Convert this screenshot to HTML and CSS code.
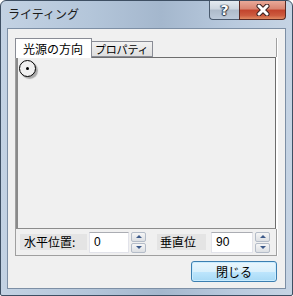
FILE: index.html
```html
<!DOCTYPE html>
<html lang="ja">
<head>
    <meta charset="UTF-8">
    <title>ライティング</title>
    <link rel="stylesheet" href="styles.css">
</head>
<body>
    <div class="window">
        <div class="titlebar">
            <span class="title">ライティング</span>
            <div class="caption-buttons">
                <div class="cap-btn help">?</div>
                <div class="cap-btn close">
                    <svg width="14" height="12" viewBox="0 0 14 12">
                        <path d="M3 2 L11 10 M11 2 L3 10" stroke="#3a2020" stroke-width="5" stroke-linecap="round"/>
                        <path d="M3 2 L11 10 M11 2 L3 10" stroke="#ffffff" stroke-width="3" stroke-linecap="round"/>
                    </svg>
                </div>
            </div>
        </div>

        <div class="client">
            <div class="frame">
                <div class="tabs">
                    <div class="tab active">光源の方向</div>
                    <div class="tab">プロパティ</div>
                </div>
                <div class="panel">
                    <div class="light-knob"><span class="dot"></span></div>
                </div>
                <div class="controls">
                    <span class="field-label first">水平位置:</span>
                    <div class="num-input wide">0</div>
                    <div class="spinner">
                        <div class="spin up"></div>
                        <div class="spin down"></div>
                    </div>
                    <span class="field-label second">垂直位</span>
                    <div class="num-input wider">90</div>
                    <div class="spinner">
                        <div class="spin up"></div>
                        <div class="spin down"></div>
                    </div>
                </div>
            </div>
            <div class="actions">
                <button class="btn-default">閉じる</button>
            </div>
        </div>
    </div>
</body>
</html>
```

FILE: styles.css
```css
* {
    margin: 0;
    padding: 0;
    box-sizing: border-box;
}

body {
    font-family: "Noto Sans CJK JP", "Noto Sans", sans-serif;
    font-size: 12px;
    color: #000;
    background: #fff;
}

.window {
    width: 293px;
    height: 296px;
    border: 1px solid #3e4f63;
    border-radius: 6px 6px 2px 2px;
    background: linear-gradient(to right, #c3d2e3 0%, #b4c6da 30%, #a4b7cd 55%, #b9cade 80%, #c6d4e4 100%);
    display: flex;
    flex-direction: column;
}

.titlebar {
    height: 27px;
    display: flex;
    align-items: flex-start;
    padding: 0 6px 0 7px;
}

.title {
    line-height: 26px;
    font-size: 12px;
    color: #1a1a1a;
}

.caption-buttons {
    margin-left: auto;
    display: flex;
}

.cap-btn {
    height: 19px;
    border: 1px solid #4a5a6e;
    border-top: none;
    display: flex;
    align-items: center;
    justify-content: center;
}

.help {
    width: 30px;
    border-radius: 0 0 0 4px;
    border-right: none;
    background: linear-gradient(#e4eaf0 0%, #ccd5df 45%, #aebbca 50%, #bccada 100%);
    color: #fff;
    font-family: "DejaVu Sans", sans-serif;
    font-weight: bold;
    font-size: 14px;
    text-shadow: 0 0 1px #2a3444, 1px 0 1px #2a3444, -1px 0 1px #2a3444, 0 1px 1px #2a3444;
}

.close {
    width: 47px;
    border-radius: 0 0 4px 0;
    border-color: #5a2a24;
    background: linear-gradient(#e9a999 0%, #d98470 45%, #c2432c 50%, #cc5a3e 80%, #e08a62 100%);
}

.client {
    height: 261px;
    margin: 0 6px;
    border: 1px solid #7d8fa5;
    background: #f0f0f0;
    padding: 9px 8px 0 7px;
}

.frame {
    width: 262px;
    height: 218px;
    border: 1px solid #a0a0a0;
    border-top: none;
    box-shadow: 1px 0 0 #fff;
    display: flex;
    flex-direction: column;
}

.tabs {
    display: flex;
    align-items: flex-end;
    height: 19px;
    margin-left: -1px;
    position: relative;
    z-index: 1;
}

.tab {
    height: 16px;
    width: 61px;
    border: 1px solid #898c95;
    border-left: none;
    background: linear-gradient(#f2f2f2, #dedede);
    padding-left: 3px;
    line-height: 15px;
    font-size: 11px;
    letter-spacing: -0.2px;
    white-space: nowrap;
    overflow: hidden;
}

.tab.active {
    height: 20px;
    margin-bottom: -1px;
    width: 77px;
    border-left: 1px solid #898c95;
    border-bottom: none;
    background: #fff;
    line-height: 19px;
    padding-left: 7px;
    font-size: 12px;
    letter-spacing: 0;
}

.panel {
    height: 172px;
    border: 1px solid #6d6d6d;
    border-left: 2px solid #8a8a8a;
    border-bottom-color: #8c8c8c;
    background: #f0f0f0;
    box-shadow: 1px 0 0 #fff;
    padding: 2px 0 0 1px;
}

.light-knob {
    width: 17px;
    height: 17px;
    border: 1px solid #000;
    border-radius: 50%;
    background: #f0f0f0;
    box-shadow: 2px 2px 1px #a8a8a8;
    display: flex;
    align-items: center;
    justify-content: center;
}

.dot {
    width: 3px;
    height: 3px;
    background: #000;
    border-radius: 50%;
}

.controls {
    flex: 1;
    display: flex;
    align-items: center;
    padding-left: 4px;
}

.field-label {
    height: 16px;
    line-height: 16px;
    background: #e4e4e4;
    padding-left: 4px;
    font-size: 12px;
}

.field-label.first {
    width: 67px;
}

.field-label.second {
    width: 49px;
    margin-left: 11px;
    padding-left: 3px;
}

.num-input {
    height: 21px;
    margin-left: 2px;
    border: 1px solid #e2e3ea;
    border-top-color: #abadb3;
    background: #fff;
    padding-left: 4px;
    line-height: 18px;
    font-family: "Liberation Sans", sans-serif;
    font-size: 12px;
}

.num-input.wide {
    width: 40px;
}

.num-input.wider {
    width: 42px;
    margin-left: 5px;
}

.spinner {
    margin-left: 2px;
    width: 15px;
    height: 21px;
    display: flex;
    flex-direction: column;
    gap: 1px;
}

.spin {
    flex: 1;
    border: 1px solid #b4bcc8;
    border-radius: 2px;
    background: linear-gradient(#f6f6f6, #dcdfe3);
    display: flex;
    align-items: center;
    justify-content: center;
}

.spin.up::after,
.spin.down::after {
    content: "";
    border-left: 3px solid transparent;
    border-right: 3px solid transparent;
}

.spin.up::after {
    border-bottom: 3px solid #3d5a8a;
}

.spin.down::after {
    border-top: 3px solid #3d5a8a;
}

.actions {
    display: flex;
    justify-content: flex-end;
    padding-top: 5px;
}

.btn-default {
    width: 86px;
    height: 21px;
    border: 1px solid #3c7fb1;
    border-radius: 3px;
    background: linear-gradient(#eaf6fd 0%, #d9f0fc 50%, #bee6fd 51%, #a7d9f5 100%);
    box-shadow: inset 0 0 0 1px #c9ecff;
    font-family: "Noto Sans CJK JP", sans-serif;
    font-size: 12px;
    color: #000;
    line-height: 17px;
}
```
